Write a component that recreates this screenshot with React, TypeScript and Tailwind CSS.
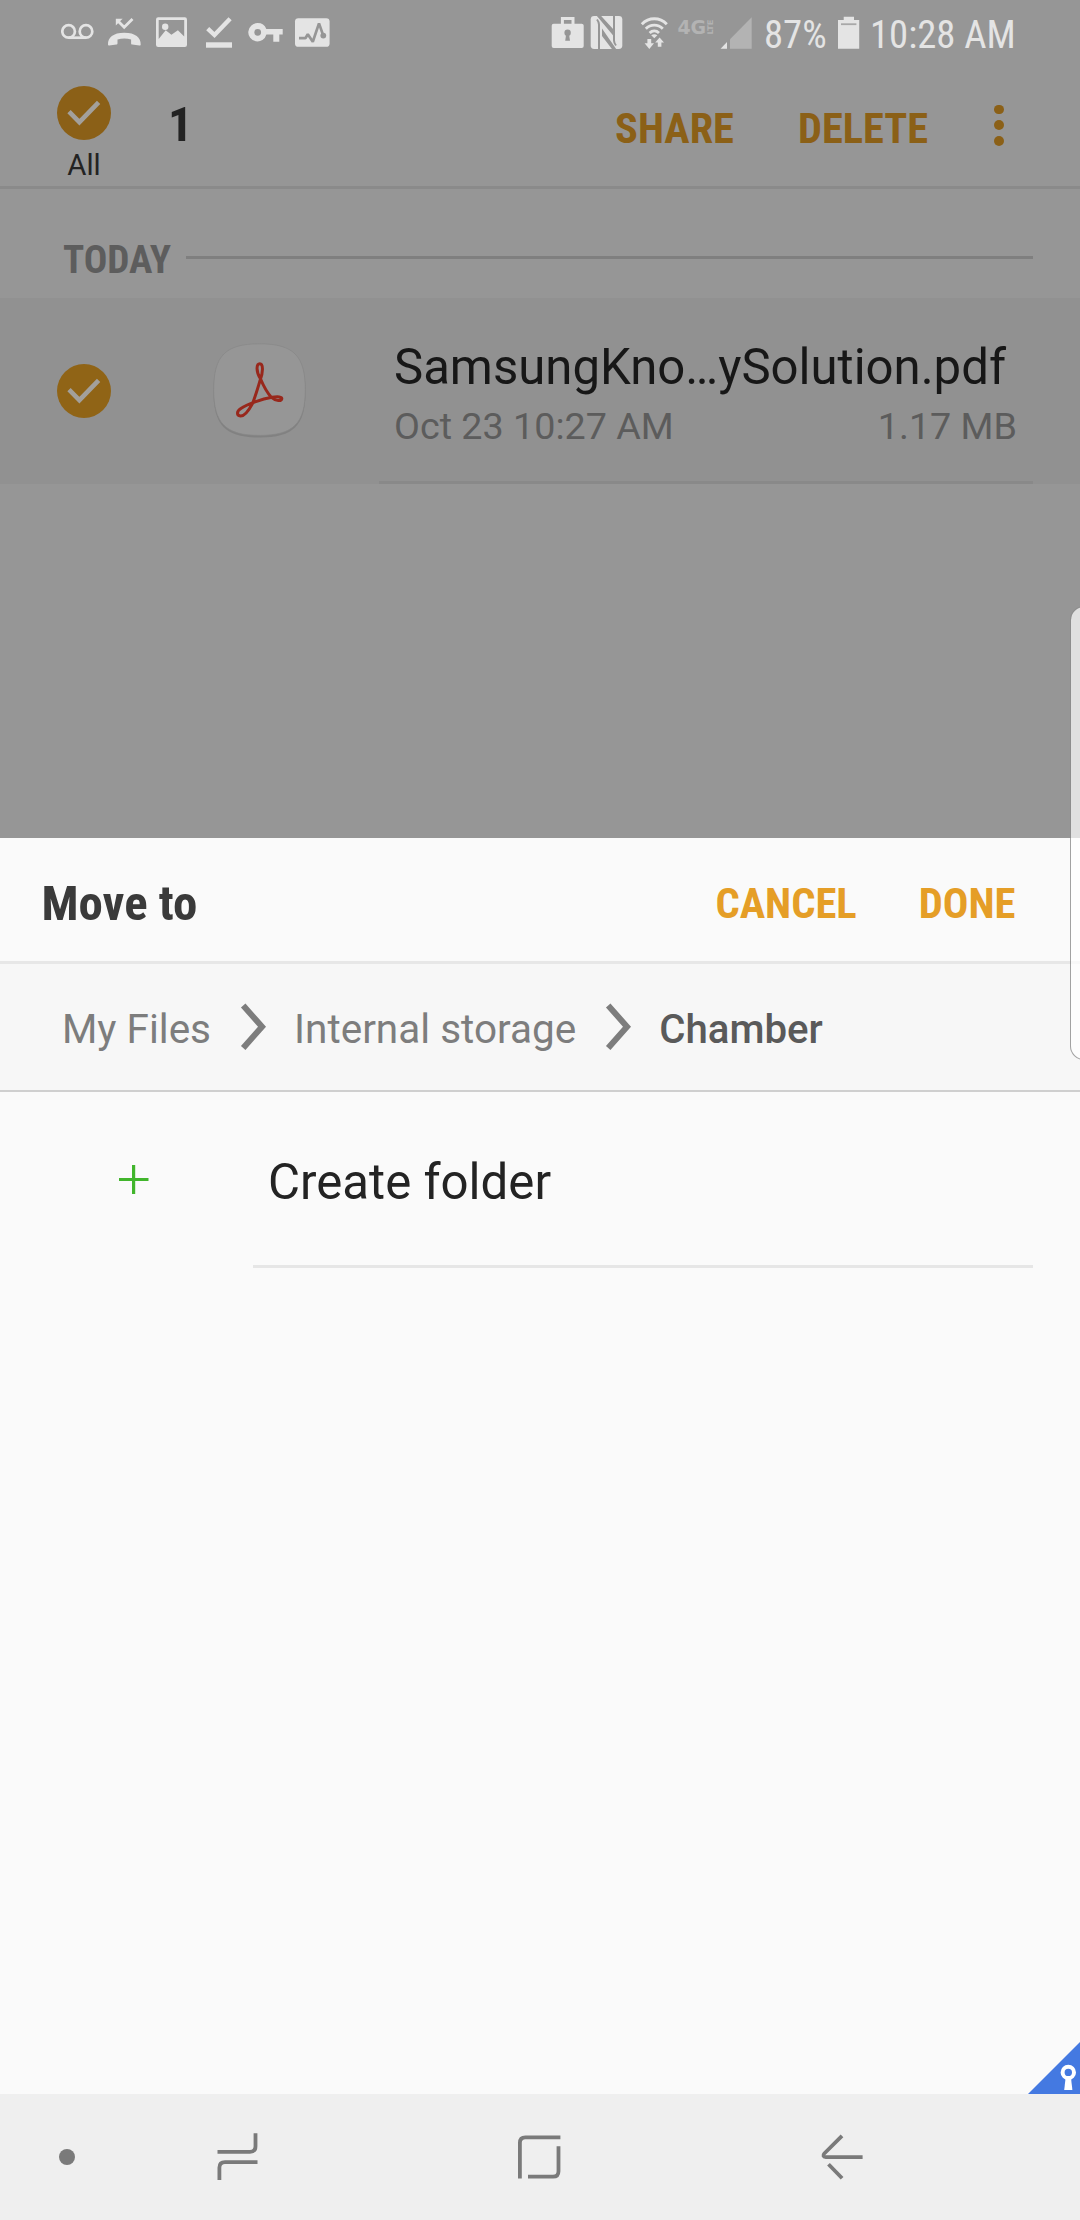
import type { ReactNode } from "react";

// Status bar icons share one 66px tall coordinate strip; x is the strip's left edge.
function StripIcon({ x, w, children }: { x: number; w: number; children: ReactNode }) {
  return (
    <svg className="shrink-0" width={w} height={66} viewBox={`${x} 0 ${w} 66`} fill="#e4e4e4">
      {children}
    </svg>
  );
}

function StatusBar() {
  return (
    <div className="flex h-[66px] text-[38.7px] leading-[69px] text-[#e4e4e4]">
      <div className="ml-[61px] flex">
        <StripIcon x={61} w={40}>
          <g fill="none" stroke="#e4e4e4" strokeWidth="2.7">
            <circle cx="68.6" cy="31.4" r="6.3" />
            <circle cx="86" cy="31.4" r="6.3" />
            <path d="M68.6 37.7H86" />
          </g>
        </StripIcon>
        <StripIcon x={101} w={48}>
          <path d="M118 21l6.2 6.2 8.3-8.2" fill="none" stroke="#e4e4e4" strokeWidth="2.8" />
          <path d="M115.8 18.7h6.8l-6.8 6.8z" />
          <path d="M108 44.6c-.2-7 5.2-11.8 16.3-11.8s16.6 4.8 16.4 11.8c0 .8-.5 1.1-1.2 1l-7.3-1c-.8-.1-1.1-.5-1.1-1.3v-3.7c-4.4-1.4-9.2-1.4-13.6 0v3.7c0 .8-.4 1.2-1.1 1.3l-7.2 1c-.8.1-1.2-.2-1.2-1z" />
        </StripIcon>
        <StripIcon x={149} w={48}>
          <rect x="156" y="17.2" width="31" height="29.8" rx="2.2" />
          <path d="M158.7 20h25.5v16.5l-6.3-6.3-6.5 4.6-5.7-4.6-7 8.8z" fill="#969696" />
          <circle cx="165.2" cy="26.8" r="3.2" />
        </StripIcon>
        <StripIcon x={197} w={43}>
          <path d="M207.7 28.6l6.8 6.4 15.6-16.3" fill="none" stroke="#e4e4e4" strokeWidth="4.4" />
          <rect x="206" y="42.3" width="26" height="5.4" />
        </StripIcon>
        <StripIcon x={240} w={50}>
          <path
            fillRule="evenodd"
            d="M257.7 23.1a9.2 9.2 0 0 1 8.6 5.9h16.4v5.6h-3.4v7.2h-6v-7.2h-6.9a9.2 9.2 0 1 1-8.7-11.5zm0 5.8a3.4 3.4 0 1 0 0 6.8 3.4 3.4 0 0 0 0-6.8z"
          />
        </StripIcon>
        <StripIcon x={290} w={46}>
          <rect x="295" y="18.2" width="34.6" height="28.6" rx="3.4" />
          <path d="M299 38.2h6.4l2.4-4 5 7.6 6.2-18.4 4.2 12" fill="none" stroke="#969696" strokeWidth="2.7" strokeLinejoin="bevel" />
          <circle cx="323.3" cy="35.6" r="2.9" fill="#969696" />
        </StripIcon>
      </div>

      <div className="ml-[215px] flex">
        <StripIcon x={551} w={36}>
          <path d="M562.4 25v-6.6h10.6V25" fill="none" stroke="#e4e4e4" strokeWidth="3" />
          <rect x="551.7" y="23.8" width="32" height="24.2" rx="2" />
          <circle cx="567.6" cy="32.8" r="3.2" fill="#969696" />
          <path d="M566.2 34h2.8l1 6.8h-4.8z" fill="#969696" />
        </StripIcon>
        <StripIcon x={587} w={45}>
          <rect x="590.7" y="16" width="31.6" height="33" rx="3.4" />
          <path d="M599 50V24.5q0-2.5-2-5M614 15v25.5q0 2.5 2 5" fill="none" stroke="#969696" strokeWidth="2" />
          <path d="M596.5 15.5h4.200L614 30v6.500zM616.500 49.500h-4.200L602 36v-7.500z" fill="#969696" />
        </StripIcon>
        <StripIcon x={632} w={44}>
          <g fill="none" stroke="#e4e4e4" strokeWidth="2.9">
            <path d="M641.8 24.2c7-7.2 18-7.2 25 0" />
            <path d="M645.8 28.7c4.8-4.8 12.2-4.8 17 0" />
            <path d="M649.6 33c2.8-2.6 6.6-2.6 9.4 0" />
          </g>
          <path d="M651.2 35.2q3.1-2 6.2 0l-3.1 3z" />
          <path d="M647.4 39h3.8v4.2h2.8l-4.7 5.8-4.7-5.8h2.8zM657.8 46.8h3.6v-4.4h2.6l-4.4-5-4.4 5h2.6z" />
        </StripIcon>
        <StripIcon x={676} w={40}>
          <text x="677.4" y="34" fontFamily="DejaVu Sans" fontWeight="700" fontSize="19.4" textLength="28.8" lengthAdjust="spacingAndGlyphs" fill="#b3b3b3">
            4G
          </text>
          <text transform="translate(713 34.6) rotate(-90)" fontFamily="DejaVu Sans" fontWeight="700" fontSize="7.8" textLength="15" lengthAdjust="spacingAndGlyphs" fill="#b3b3b3">
            LTE
          </text>
        </StripIcon>
        <StripIcon x={716} w={48}>
          <path d="M730 39.3l21.7-22v31.4H730z" fill="#b3b3b3" />
          <path d="M720.6 48.7l6.4-6.6v6.6z" />
        </StripIcon>
        <span className="w-[63px] [font-stretch:75%]">87%</span>
        <StripIcon x={827} w={43}>
          <path d="M843.7 20v-3.2H854V20h5.2v28.8H838V20z" />
          <rect x="841" y="23.3" width="15.4" height="1.8" fill="#a8a8a8" />
        </StripIcon>
        <span className="[font-stretch:75%]">10:28 AM</span>
      </div>
    </div>
  );
}

function CheckDisc({ className }: { className: string }) {
  return (
    <svg className={className} width="54" height="54" viewBox="0 0 54 54">
      <circle cx="27" cy="27" r="27" fill="currentColor" />
      <path d="M12 25.6l10.4 10.6L41.6 16.4" fill="none" stroke="#a3a09b" strokeWidth="4.6" />
    </svg>
  );
}

function PdfIcon() {
  return (
    <svg className="mt-[42px] shrink-0" width="100" height="104" viewBox="210 340 100 104">
      <path
        d="M259.5 345.6c34 0 46 12 46 45.9s-12 46-46 46-46-12-46-46 12-45.9 46-45.9z"
        fill="#7b7b7b"
        opacity=".7"
      />
      <path
        d="M259.5 343.8c34 0 45.8 12 45.8 45.8s-11.8 45.8-45.8 45.8-45.8-12-45.8-45.8 11.8-45.8 45.8-45.8z"
        fill="#969696"
        stroke="#868686"
        strokeWidth=".7"
      />
      <path
        d="M260.6 379C255.5 371 256.5 363.7 259.8 363.7C263 363.7 263.5 371 260.2 380C257.5 389 255.5 396 252.5 403.5C248.5 411 244.5 416.2 240.5 416C236.5 415.5 236.5 411.5 240.5 408.8C247.5 404 262 399 272 397.3C278 396.3 282 396.8 281.8 398.8C281.5 401.2 276 401.5 271.5 397.5C266.5 392 263.5 386 260.6 379Z"
        fill="none"
        stroke="#98281c"
        strokeWidth="3"
        strokeLinejoin="round"
      />
    </svg>
  );
}

function SelectionHeader() {
  return (
    <div className="flex h-[123px] border-b-[3px] border-[#8a8a8a]">
      <div className="ml-[57px] flex w-[54px] flex-col items-center pt-5">
        <CheckDisc className="text-[#8b6017]" />
        <span className="mt-[5px] text-[29.4px] leading-10 text-[#232323]">All</span>
      </div>
      <span className="ml-[57px] text-[49px] leading-[118px] font-bold text-[#232323] [font-stretch:75%]">1</span>
      <div className="ml-auto flex text-[42.4px] leading-[125px] font-bold text-[#8b6017] [font-stretch:75%]">
        <span className="mr-[64px]">SHARE</span>
        <span>DELETE</span>
      </div>
      <div className="mt-[38.5px] mr-[76px] ml-[66px] flex w-[10px] flex-col gap-[6.4px]">
        <i className="size-[9.6px] rounded-full bg-[#8b6017]" />
        <i className="size-[9.6px] rounded-full bg-[#8b6017]" />
        <i className="size-[9.6px] rounded-full bg-[#8b6017]" />
      </div>
    </div>
  );
}

function FileRow() {
  return (
    <div className="flex h-[186px] bg-[#919191]">
      <CheckDisc className="mt-[66px] mr-[99px] ml-[57px] shrink-0 text-[#906416]" />
      <PdfIcon />
      <div className="ml-[69px] flex w-[654px] flex-col border-b-[3px] border-[#898989] pt-[34px] pr-4 pl-[15px]">
        <span className="text-[49.1px] leading-[70px] whitespace-nowrap text-[#171717]">SamsungKno…ySolution.pdf</span>
        <div className="flex justify-between text-[37.7px] leading-[48px] text-[#5c5c5c]">
          <span>Oct 23 10:27 AM</span>
          <span>1.17 MB</span>
        </div>
      </div>
    </div>
  );
}

function Chevron() {
  return (
    <svg className="shrink-0" width="83" height="126" viewBox="0 0 83 126">
      <path d="M32.2 41.5l18.8 21.2-18.8 21.3" fill="none" stroke="#7d7d7d" strokeWidth="6" />
    </svg>
  );
}

function MoveSheet() {
  return (
    <div className="relative flex h-[1256px] flex-col bg-[#fafafa]">
      <div className="flex h-[126px] border-b-[3px] border-[#e7e7e7] pr-[64.5px] pl-[41.5px] leading-[131px] font-bold [font-stretch:75%]">
        <span className="text-[48.9px] text-[#3a3a3a]">Move to</span>
        <div className="ml-auto flex gap-[62px] text-[42.6px] text-[#e59e27]">
          <span>CANCEL</span>
          <span>DONE</span>
        </div>
      </div>
      <div className="flex h-[128px] border-b-2 border-[#cfcfcf] bg-[#f7f7f7] pl-[62px] text-[40.5px] leading-[131px] whitespace-nowrap text-[#7d7d7d]">
        <span>My Files</span>
        <Chevron />
        <span>Internal storage</span>
        <Chevron />
        <span className="text-[40.2px] font-medium text-[#5a5a5a]">Chamber</span>
      </div>
      <div className="flex h-[176px]">
        <svg className="ml-[118px] shrink-0" width="32" height="176" viewBox="118 1092 32 176">
          <path d="M119 1179.5h29.5M133.6 1165v29" stroke="#41b52c" strokeWidth="3.2" fill="none" />
        </svg>
        <div className="ml-[103px] w-[780px] border-b-[3px] border-[#e6e6e6] pl-[15px] text-[49.2px] leading-[180px] text-[#232323]">
          Create folder
        </div>
      </div>
      <svg className="absolute right-0 bottom-0" width="52" height="52" viewBox="1028 2042 52 52">
        <path d="M1028 2094l52-52v52z" fill="#4479e1" />
        <circle cx="1068.3" cy="2072.4" r="5.7" fill="none" stroke="#fff" strokeWidth="4" />
        <path d="M1065.6 2078h5.4l1.4 12h-8.2z" fill="#fff" />
      </svg>
    </div>
  );
}

function NavBar() {
  return (
    <div className="flex h-[126px] bg-[#efefef]">
      <svg width="135" height="126" viewBox="0 2094 135 126">
        <circle cx="67" cy="2157" r="8" fill="#7a7a7a" />
      </svg>
      <svg width="205" height="126" viewBox="135 2094 205 126" fill="none" stroke="#7a7a7a" strokeWidth="3.8">
        <path d="M217.5 2151.8h32.5q5.5 0 5.5-5.5v-13" />
        <path d="M257.5 2162.2h-32.5q-5.6 0-5.6 5.5v12.3" />
      </svg>
      <svg width="400" height="126" viewBox="340 2094 400 126" fill="none" stroke="#7a7a7a" strokeWidth="3.8">
        <path d="M519.9 2178.5v-35.7q0-5.5 5.5-5.5h35" />
        <path d="M528 2176.7h25q5.5 0 5.5-5.5v-25" />
      </svg>
      <svg width="340" height="126" viewBox="740 2094 340 126" fill="none" stroke="#7a7a7a" strokeWidth="3.8">
        <path d="M842 2135.8l-17.7 17.7c-1.7 1.7-1 3.6 1.4 3.6h36.9" />
        <path d="M828.5 2164.2l13.6 14" />
      </svg>
    </div>
  );
}

export default function App() {
  return (
    <div className="relative flex h-[2220px] w-[1080px] flex-col overflow-hidden bg-[#969696] font-['Roboto',sans-serif]">
      <StatusBar />
      <SelectionHeader />
      <div className="flex h-[109px] items-start pl-[63px]">
        <span className="w-[123px] text-[39.2px] leading-[142px] font-bold text-[#5d5d5d] [font-stretch:75%]">TODAY</span>
        <div className="mt-[67px] h-[3px] w-[847px] bg-[#7f7f7f]" />
      </div>
      <FileRow />
      <div className="h-[354px]" />
      <MoveSheet />
      <NavBar />
      {/* Edge panel handle */}
      <div className="absolute top-[606px] -right-[22px] h-[454px] w-[32px] rounded-[14px] border border-[#8c8c8c]/80 bg-white/70 bg-clip-padding" />
    </div>
  );
}
